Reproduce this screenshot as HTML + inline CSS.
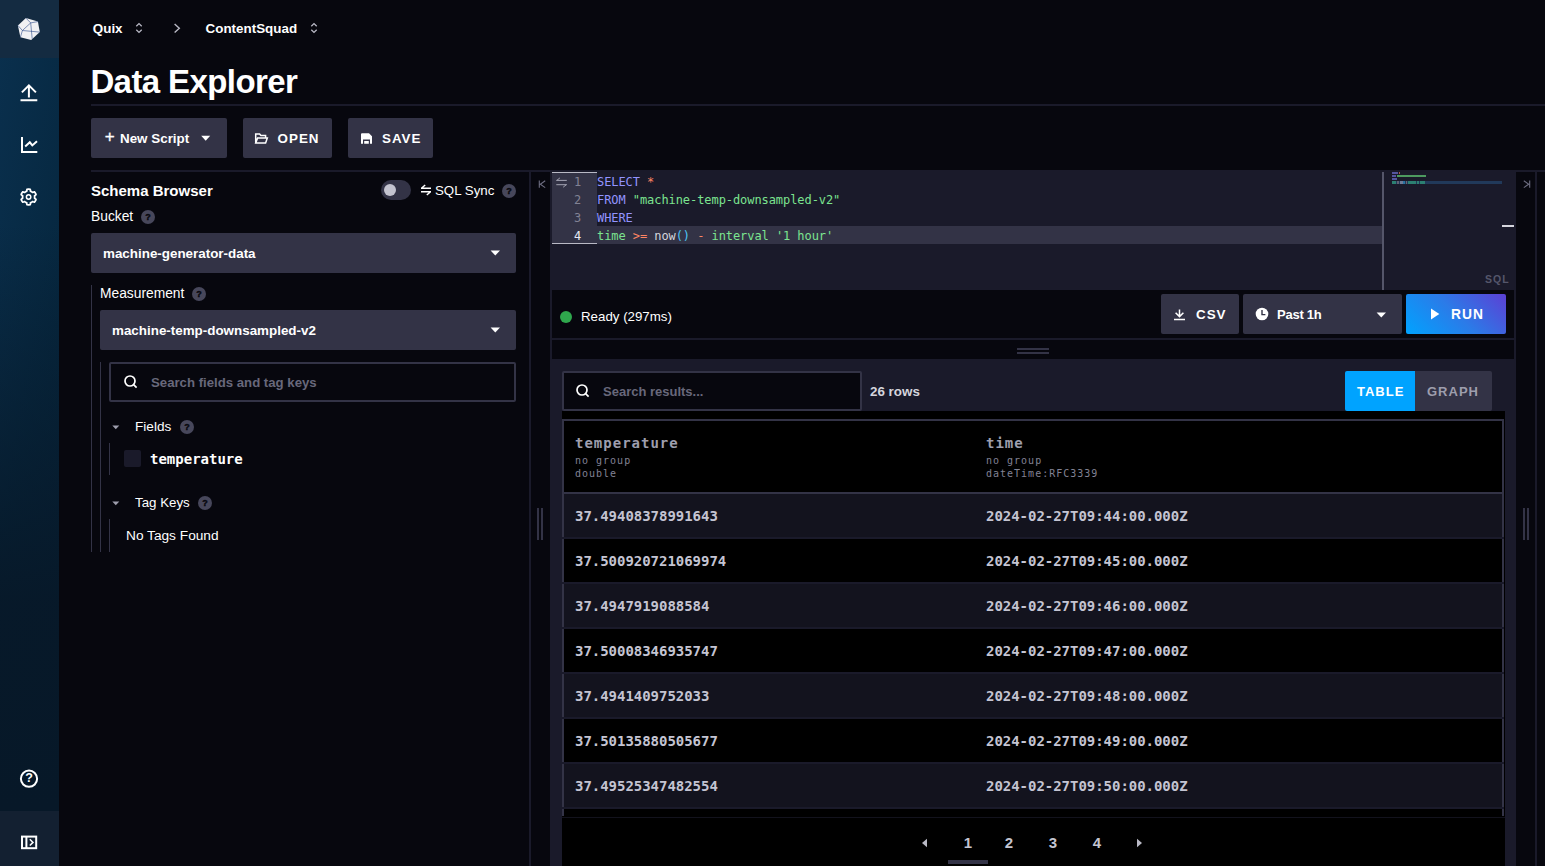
<!DOCTYPE html>
<html lang="en">
<head>
<meta charset="utf-8">
<title>Data Explorer</title>
<style>
*{box-sizing:border-box;margin:0;padding:0}
html,body{width:1545px;height:866px;overflow:hidden;background:#07070e;color:#fff;font-family:"Liberation Sans",sans-serif;}
.a{position:absolute}
.t{position:absolute;white-space:nowrap;line-height:1}
.mono{font-family:"DejaVu Sans Mono","Liberation Mono",monospace}
.b{font-weight:bold}
/* sidebar */
#nav{left:0;top:0;width:59px;height:866px;background:linear-gradient(100deg,#0a304e 0%,#06273f 55%,#052137 100%);}
#navfade{left:0;top:58px;width:59px;height:753px;background:linear-gradient(to bottom,rgba(7,24,40,0) 0%,rgba(7,24,40,0) 22%,rgba(7,24,40,.93) 72%,rgba(7,24,40,1) 100%);}
#navtop{left:0;top:0;width:59px;height:58px;background:#142b41}
#navbot{left:0;top:811px;width:59px;height:55px;background:#132031}
.btn{position:absolute;background:#333346;border-radius:2px}
.hr{position:absolute;background:#1a1a2a}
.q{position:absolute;width:14px;height:14px;border-radius:50%;background:#47475b;color:#07070e;font-size:9px;font-weight:bold;text-align:center;line-height:14px;-webkit-text-stroke:0.4px #07070e;font-family:"Liberation Sans",sans-serif}
.rv{letter-spacing:-0.03px;color:#c4c4d2 !important}
</style>
</head>
<body>
<nav aria-label="Main">
<!-- SIDEBAR -->
<div id="nav" class="a"></div>
<div id="navfade" class="a"></div>
<div id="navtop" class="a"></div>
<div id="navbot" class="a"></div>


<!-- NAV ICONS -->
<svg class="a" style="left:16px;top:16px" width="26" height="26" viewBox="16 16 26 26"><path d="M25.9 18.1 L37.9 21.6 L39.8 32.1 L31.2 40 L20.4 37.3 L17.9 25.4 Z" fill="#f1f1f3"/><path d="M25.9 18.1 L30.7 22.9 L22.4 30.5 L17.9 25.4 M30.7 22.9 L37.9 21.6 M30.7 22.9 L32.2 38.8 M22.4 30.5 L39.8 32.1 M22.4 30.5 L20.4 37.3" fill="none" stroke="#2c4a8a" stroke-width="0.6"/></svg>
<svg class="a" style="left:19px;top:82px" width="20" height="21" viewBox="19 82 20 21" fill="none" stroke="#fff" stroke-width="2"><path d="M28.9 97.6 V85.6 M21.9 92.4 L28.9 85.4 L35.9 92.4 M20.5 100.2 H37.3"/></svg>
<svg class="a" style="left:19px;top:135px" width="20" height="20" viewBox="19 135 20 20" fill="none" stroke="#fff" stroke-width="2"><path d="M22 137.1 V152.1 H37.3 M25.2 146.6 L29.8 142.3 L32.3 145.4 L37 141.2"/></svg>
<svg class="a" style="left:18px;top:186px" width="22" height="22" viewBox="-11 -11 22 22" fill="none" stroke="#fff"><path d="M6.05 0.00 L6.05 0.21 L6.04 0.42 L6.02 0.63 L5.99 0.84 L5.96 1.05 L5.98 1.27 L6.45 1.61 L6.92 1.98 L7.36 2.39 L7.33 2.67 L7.23 2.92 L7.13 3.17 L7.01 3.42 L6.89 3.66 L6.75 3.90 L6.61 4.13 L6.47 4.36 L6.31 4.58 L6.15 4.80 L5.98 5.01 L5.75 5.18 L5.18 5.00 L4.62 4.78 L4.09 4.54 L3.89 4.63 L3.72 4.77 L3.56 4.89 L3.38 5.02 L3.21 5.13 L3.03 5.24 L2.84 5.34 L2.65 5.44 L2.46 5.53 L2.27 5.61 L2.07 5.69 L1.89 5.81 L1.83 6.39 L1.74 6.99 L1.61 7.57 L1.35 7.68 L1.09 7.72 L0.82 7.76 L0.54 7.78 L0.27 7.80 L0.00 7.80 L-0.27 7.80 L-0.54 7.78 L-0.82 7.76 L-1.09 7.72 L-1.35 7.68 L-1.61 7.57 L-1.74 6.99 L-1.83 6.39 L-1.89 5.81 L-2.07 5.69 L-2.27 5.61 L-2.46 5.53 L-2.65 5.44 L-2.84 5.34 L-3.02 5.24 L-3.21 5.13 L-3.38 5.02 L-3.56 4.89 L-3.72 4.77 L-3.89 4.63 L-4.09 4.54 L-4.62 4.78 L-5.18 5.00 L-5.75 5.18 L-5.98 5.01 L-6.15 4.80 L-6.31 4.58 L-6.47 4.36 L-6.61 4.13 L-6.75 3.90 L-6.89 3.66 L-7.01 3.42 L-7.13 3.17 L-7.23 2.92 L-7.33 2.67 L-7.36 2.39 L-6.92 1.98 L-6.45 1.61 L-5.98 1.27 L-5.96 1.05 L-5.99 0.84 L-6.02 0.63 L-6.04 0.42 L-6.05 0.21 L-6.05 0.00 L-6.05 -0.21 L-6.04 -0.42 L-6.02 -0.63 L-5.99 -0.84 L-5.96 -1.05 L-5.98 -1.27 L-6.45 -1.61 L-6.92 -1.98 L-7.36 -2.39 L-7.33 -2.67 L-7.23 -2.92 L-7.13 -3.17 L-7.01 -3.42 L-6.89 -3.66 L-6.75 -3.90 L-6.61 -4.13 L-6.47 -4.36 L-6.31 -4.58 L-6.15 -4.80 L-5.98 -5.01 L-5.75 -5.18 L-5.18 -5.00 L-4.62 -4.78 L-4.09 -4.54 L-3.89 -4.63 L-3.72 -4.77 L-3.56 -4.89 L-3.38 -5.02 L-3.21 -5.13 L-3.03 -5.24 L-2.84 -5.34 L-2.65 -5.44 L-2.46 -5.53 L-2.27 -5.61 L-2.07 -5.69 L-1.89 -5.81 L-1.83 -6.39 L-1.74 -6.99 L-1.61 -7.57 L-1.35 -7.68 L-1.09 -7.72 L-0.82 -7.76 L-0.54 -7.78 L-0.27 -7.80 L-0.00 -7.80 L0.27 -7.80 L0.54 -7.78 L0.82 -7.76 L1.09 -7.72 L1.35 -7.68 L1.61 -7.57 L1.74 -6.99 L1.83 -6.39 L1.89 -5.81 L2.07 -5.69 L2.27 -5.61 L2.46 -5.53 L2.65 -5.44 L2.84 -5.34 L3.03 -5.24 L3.21 -5.13 L3.38 -5.02 L3.56 -4.89 L3.72 -4.77 L3.89 -4.63 L4.09 -4.54 L4.62 -4.78 L5.18 -5.00 L5.75 -5.18 L5.98 -5.01 L6.15 -4.80 L6.31 -4.58 L6.47 -4.36 L6.61 -4.13 L6.75 -3.90 L6.89 -3.66 L7.01 -3.42 L7.13 -3.17 L7.23 -2.92 L7.33 -2.67 L7.36 -2.39 L6.92 -1.98 L6.45 -1.61 L5.98 -1.27 L5.96 -1.05 L5.99 -0.84 L6.02 -0.63 L6.04 -0.42 L6.05 -0.21 Z" stroke-width="1.8" stroke-linejoin="round" transform="translate(-0.4,0)"/><circle cx="-0.4" cy="0" r="2.2" stroke-width="1.5"/></svg>
<svg class="a" style="left:18px;top:768px" width="22" height="22" viewBox="18 768 22 22" fill="none" stroke="#fff" stroke-width="2"><circle cx="29" cy="778.7" r="8.1"/></svg>
<div class="t b" style="left:25px;top:772px;width:8px;text-align:center;font-size:12.5px">?</div>
<svg class="a" style="left:19px;top:833px" width="20" height="18" viewBox="19 833 20 18" fill="none" stroke="#fff"><rect x="22" y="836.6" width="14.2" height="11.6" stroke-width="2"/><path d="M26.4 836 V849" stroke-width="2"/><path d="M29.8 839.3 L33 842.4 L29.8 845.5" stroke-width="1.5"/></svg>
</nav>
<header>
<!-- BREADCRUMB -->
<div id="bc1" class="t b" style="left:92.8px;top:22px;font-size:13.4px">Quix</div>
<svg class="a" style="left:134px;top:21px" width="10" height="14" viewBox="0 0 10 14" fill="none" stroke="#b9b9c5" stroke-width="1.3"><path d="M2.3 5.2 L5 2.6 L7.7 5.2 M2.3 8.8 L5 11.4 L7.7 8.8"/></svg>
<svg class="a" style="left:171px;top:21px" width="12" height="14" viewBox="0 0 12 14" fill="none" stroke="#b9b9c5" stroke-width="1.4"><path d="M3.6 3 L8.3 7.2 L3.6 11.4"/></svg>
<div id="bc2" class="t b" style="left:205.6px;top:22px;font-size:13.4px">ContentSquad</div>
<svg class="a" style="left:309px;top:21px" width="10" height="14" viewBox="0 0 10 14" fill="none" stroke="#b9b9c5" stroke-width="1.3"><path d="M2.3 5.2 L5 2.6 L7.7 5.2 M2.3 8.8 L5 11.4 L7.7 8.8"/></svg>

<!-- TITLE -->
<div id="title" class="t b" style="left:90.4px;top:65px;font-size:33px;letter-spacing:-0.6px">Data Explorer</div>
<div class="hr" style="left:91px;top:104px;width:1454px;height:2px"></div>

<!-- BUTTON ROW -->
<div class="btn" style="left:91px;top:118px;width:136px;height:40px"></div>
<div class="t" style="left:104.7px;top:128px;font-size:17px;font-weight:normal;-webkit-text-stroke:0.3px #fff">+</div>
<div id="bnew" class="t b" style="left:120px;top:132px;font-size:13.4px">New Script</div>
<svg class="a" style="left:200px;top:135px" width="12" height="7" viewBox="0 0 12 7"><path d="M1.2 0.8 L10.2 0.8 L5.7 5.8 Z" fill="#fff"/></svg>
<div class="btn" style="left:243px;top:118px;width:89px;height:40px"></div>
<svg class="a" style="left:254px;top:132px" width="15" height="13" viewBox="0 0 15 13" fill="none" stroke="#fff" stroke-width="1.5" stroke-linejoin="miter"><path d="M1.7 11 L1.7 1.9 L5.6 1.9 L6.9 3.4 L11.6 3.4 L11.6 5.6 M1.7 11 L3.6 6 L13.3 6 L11.6 11 Z"/></svg>
<div id="bopen" class="t b" style="left:277.6px;top:132px;font-size:13.4px;letter-spacing:1px">OPEN</div>
<div class="btn" style="left:348px;top:118px;width:85px;height:40px"></div>
<svg class="a" style="left:361px;top:133px" width="11" height="11" viewBox="0 0 11 11"><path d="M1 0.3 H8 L11 3.3 V10.8 H9 V6.6 H2 V10.8 H0 V1.3 Q0 0.3 1 0.3 Z M3.2 8 H7.8 V10.8 H3.2 Z" fill="#fff"/></svg>
<div id="bsave" class="t b" style="left:382px;top:132px;font-size:13.4px;letter-spacing:1px">SAVE</div>
<div class="hr" style="left:91px;top:170px;width:1454px;height:2px"></div>

</header>
<aside>
<!-- LEFT PANEL -->
<div id="sb" class="t b" style="left:91px;top:183px;font-size:15px">Schema Browser</div>
<div class="a" style="left:381px;top:180px;width:30px;height:20px;border-radius:10px;background:#333346"></div>
<div class="a" style="left:384px;top:184px;width:12px;height:12px;border-radius:50%;background:#c3c3cf"></div>
<svg class="a" style="left:420px;top:184px" width="12" height="12" viewBox="0 0 12 12" fill="none" stroke="#fff" stroke-width="1.4"><path d="M1 4.3 H11 M5.2 0.9 L1.4 4.3 M11 7.7 H1 M6.8 11.1 L10.6 7.7"/></svg>
<div id="sqlsync" class="t" style="left:435px;top:184px;font-size:13.3px">SQL Sync</div>
<div class="q" style="left:502px;top:184px">?</div>
<div id="bucket" class="t" style="left:91px;top:210px;font-size:13.8px">Bucket</div>
<div class="q" style="left:141px;top:210px">?</div>
<div class="btn" style="left:91px;top:233px;width:425px;height:40px"></div>
<div id="dd1" class="t b" style="left:103px;top:247px;font-size:13.4px">machine-generator-data</div>
<svg class="a" style="left:490px;top:250px" width="11" height="6" viewBox="0 0 11 6"><path d="M0.6 0.4 L10 0.4 L5.3 5.4 Z" fill="#fff"/></svg>
<div class="a" style="left:91px;top:285px;width:1px;height:267px;background:#333346"></div>
<div id="meas" class="t" style="left:100px;top:287px;font-size:13.8px">Measurement</div>
<div class="q" style="left:192px;top:287px">?</div>
<div class="btn" style="left:100px;top:310px;width:416px;height:40px"></div>
<div id="dd2" class="t b" style="left:112px;top:324px;font-size:13.4px">machine-temp-downsampled-v2</div>
<svg class="a" style="left:490px;top:327px" width="11" height="6" viewBox="0 0 11 6"><path d="M0.6 0.4 L10 0.4 L5.3 5.4 Z" fill="#fff"/></svg>
<div class="a" style="left:100px;top:362px;width:1px;height:190px;background:#333346"></div>
<div class="a" style="left:109px;top:362px;width:407px;height:40px;border:2px solid #333346;border-radius:2px;background:#07070e"></div>
<svg class="a" style="left:123px;top:374px" width="16" height="16" viewBox="0 0 16 16" fill="none" stroke="#fff" stroke-width="1.7"><circle cx="7" cy="7" r="5"/><path d="M10.6 10.6 L13.6 13.6"/></svg>
<div id="ph1" class="t b" style="left:151px;top:376px;font-size:13.2px;color:#68687b">Search fields and tag keys</div>
<svg class="a" style="left:112px;top:425px" width="8" height="5" viewBox="0 0 8 5"><path d="M0.3 0.5 L7.3 0.5 L3.8 4.3 Z" fill="#9e9ead"/></svg>
<div id="fields" class="t" style="left:135px;top:420px;font-size:13.6px">Fields</div>
<div class="q" style="left:180px;top:420px">?</div>
<div class="a" style="left:109px;top:443px;width:1px;height:32px;background:#333346"></div>
<div class="a" style="left:124px;top:450px;width:17px;height:17px;border-radius:2px;background:#1a1a2a"></div>
<div id="temp" class="t mono b" style="left:150px;top:452px;font-size:14px">temperature</div>
<svg class="a" style="left:112px;top:501px" width="8" height="5" viewBox="0 0 8 5"><path d="M0.3 0.5 L7.3 0.5 L3.8 4.3 Z" fill="#9e9ead"/></svg>
<div id="tagkeys" class="t" style="left:135px;top:496px;font-size:13.3px">Tag Keys</div>
<div class="q" style="left:198px;top:496px">?</div>
<div class="a" style="left:109px;top:519px;width:1px;height:33px;background:#333346"></div>
<div id="notags" class="t" style="left:126px;top:529px;font-size:13.7px">No Tags Found</div>
</aside>
<main>
<!-- DIVIDERS -->
<div class="hr" style="left:529px;top:172px;width:2px;height:694px"></div>
<div class="a" style="left:537px;top:508px;width:2px;height:32px;background:#333346"></div>
<div class="a" style="left:541px;top:508px;width:2px;height:32px;background:#333346"></div>
<svg class="a" style="left:537px;top:179px" width="10" height="10" viewBox="0 0 10 10" fill="none" stroke="#6e6e82" stroke-width="1.1"><path d="M2.3 1.6 V8.8 M8.2 1.8 L3.3 5.2 L8.2 8.6"/></svg>

<!-- EDITOR -->
<div class="a" style="left:550px;top:172px;width:966px;height:694px;background:#1a1a2a"></div>
<div class="a" style="left:552px;top:290px;width:962px;height:48px;background:#07070e"></div>
<div class="a" style="left:552px;top:340px;width:962px;height:19px;background:#07070e"></div>
<div class="a" style="left:597px;top:226px;width:785px;height:18px;background:#333346"></div>
<div class="a" style="left:552px;top:172px;width:45px;height:72px;background:#333346;border-top:1px solid #b9b9c5;border-bottom:1px solid #b9b9c5"></div>
<svg class="a" style="left:556px;top:176px" width="12" height="12" viewBox="0 0 12 12" fill="none" stroke="#a5a5b4" stroke-width="1"><path d="M0.3 4.4 H10.8 M0.8 4.4 L3.9 1.9 M10.8 8.7 H0.3 M10.3 8.7 L7.2 11.2"/></svg>
<div class="t mono" style="left:553px;top:173px;width:45px;font-size:12px;line-height:18px;color:#828294"><div style="padding-left:21px">1</div><div style="padding-left:21px">2</div><div style="padding-left:21px">3</div><div style="padding-left:21px;color:#e7e8f3">4</div></div>
<div id="code" class="t mono" style="left:597px;top:173px;font-size:12px;line-height:18px;color:#d5d5dd;letter-spacing:-0.07px"><div><span style="color:#9394ff">SELECT</span> <span style="color:#ff8564">*</span></div><div><span style="color:#9394ff">FROM</span> <span style="color:#7ce490">"machine-temp-downsampled-v2"</span></div><div><span style="color:#9394ff">WHERE</span></div><div><span style="color:#7ce490">time</span> <span style="color:#ff8564">&gt;=</span> <span style="color:#d5d5dd">now</span><span style="color:#4ec5f5">()</span> <span style="color:#ff8564">-</span> <span style="color:#7ce490">interval</span> <span style="color:#7ce490">'1 hour'</span></div></div>
<!-- minimap -->
<div class="a" style="left:1382px;top:172px;width:2px;height:118px;background:#55566a"></div>
<div class="a" style="left:1392px;top:181px;width:110px;height:3px;background:#21395a"></div>
<div class="a" style="left:1392px;top:181px;width:4px;height:3px;background:#2c8072"></div>
<div class="a" style="left:1397px;top:181px;width:2px;height:3px;background:#5f6174"></div>
<div class="a" style="left:1400px;top:181px;width:3px;height:3px;background:#6f7b97"></div>
<div class="a" style="left:1403px;top:181px;width:2px;height:3px;background:#2a72a0"></div>
<div class="a" style="left:1406px;top:181px;width:1px;height:3px;background:#6a6474"></div>
<div class="a" style="left:1408px;top:181px;width:8px;height:3px;background:#2c8072"></div>
<div class="a" style="left:1417px;top:181px;width:2px;height:3px;background:#2c8072"></div>
<div class="a" style="left:1420px;top:181px;width:5px;height:3px;background:#2c8072"></div>
<div class="a" style="left:1392px;top:172px;width:6px;height:2px;background:#5556a0"></div>
<div class="a" style="left:1399px;top:172px;width:1px;height:2px;background:#a85a4a"></div>
<div class="a" style="left:1392px;top:175px;width:4px;height:2px;background:#5556a0"></div>
<div class="a" style="left:1397px;top:175px;width:29px;height:2px;background:#4d9a60"></div>
<div class="a" style="left:1392px;top:178px;width:5px;height:2px;background:#5556a0"></div>
<div class="a" style="left:1502px;top:225px;width:12px;height:2px;background:#d5d5dd"></div>
<div id="sql" class="t b" style="left:1485px;top:274px;font-size:10.5px;letter-spacing:1px;color:#55566a">SQL</div>
<!-- right strip -->
<div class="hr" style="left:1535px;top:171px;width:2px;height:695px"></div>
<svg class="a" style="left:1522px;top:179px" width="10" height="10" viewBox="0 0 10 10" fill="none" stroke="#6e6e82" stroke-width="1.1"><path d="M7.7 1.6 V8.8 M1.8 1.8 L6.7 5.2 L1.8 8.6"/></svg>
<div class="a" style="left:1523px;top:508px;width:2px;height:32px;background:#333346"></div>
<div class="a" style="left:1527px;top:508px;width:2px;height:32px;background:#333346"></div>

<!-- STATUS ROW -->
<div class="a" style="left:560px;top:311px;width:12px;height:12px;border-radius:50%;background:#2fa74d"></div>
<div id="ready" class="t" style="left:581px;top:310px;font-size:13.3px">Ready (297ms)</div>
<div class="btn" style="left:1161px;top:294px;width:78px;height:40px"></div>
<svg class="a" style="left:1173px;top:307px" width="13" height="14" viewBox="0 0 13 14" fill="none" stroke="#fff" stroke-width="1.5"><path d="M6.5 2.4 V9.4 M2.6 5.8 L6.5 9.6 L10.4 5.8 M1 12.4 H12"/></svg>
<div id="csv" class="t b" style="left:1196px;top:308px;font-size:13.4px;letter-spacing:1px">CSV</div>
<div class="btn" style="left:1243px;top:294px;width:159px;height:40px"></div>
<svg class="a" style="left:1255px;top:307px" width="14" height="14" viewBox="0 0 14 14"><circle cx="7" cy="7" r="6.3" fill="#fff"/><path d="M7 3 V7.6 H10.4" fill="none" stroke="#333346" stroke-width="1.4"/></svg>
<div id="past" class="t b" style="left:1277px;top:308px;letter-spacing:-0.25px;font-size:13px">Past 1h</div>
<svg class="a" style="left:1376px;top:312px" width="11" height="6" viewBox="0 0 11 6"><path d="M0.6 0.4 L10 0.4 L5.3 5.4 Z" fill="#fff"/></svg>
<div class="a" style="left:1406px;top:294px;width:100px;height:40px;border-radius:2px;background:linear-gradient(45deg,#00a3ff 0%,#2b7be8 50%,#5c40d4 100%)"></div>
<svg class="a" style="left:1430px;top:308px" width="10" height="12" viewBox="0 0 10 12"><path d="M1 0.5 L9.3 6 L1 11.5 Z" fill="#fff"/></svg>
<div id="run" class="t b" style="left:1451px;top:308px;font-size:13.8px;letter-spacing:1px">RUN</div>
<div class="a" style="left:1017px;top:348px;width:32px;height:2px;background:#333346"></div>
<div class="a" style="left:1017px;top:352px;width:32px;height:2px;background:#333346"></div>

<!-- RESULTS -->
<div class="a" style="left:562px;top:371px;width:300px;height:40px;border:2px solid #333346;border-radius:2px;background:#07070e"></div>
<svg class="a" style="left:575px;top:383px" width="16" height="16" viewBox="0 0 16 16" fill="none" stroke="#fff" stroke-width="1.7"><circle cx="7" cy="7" r="5"/><path d="M10.6 10.6 L13.6 13.6"/></svg>
<div id="ph2" class="t b" style="left:603px;top:385px;font-size:13px;color:#68687b">Search results...</div>
<div id="rows" class="t b" style="left:870px;top:385px;font-size:13.4px;color:#d5d5dd">26 rows</div>
<div class="a" style="left:1345px;top:371px;width:70px;height:40px;background:#00a3ff;border-radius:2px 0 0 2px"></div>
<div id="ttable" class="t b" style="left:1357px;top:385px;font-size:13px;letter-spacing:1px">TABLE</div>
<div class="a" style="left:1415px;top:371px;width:77px;height:40px;background:#333346;border-radius:0 2px 2px 0"></div>
<div id="tgraph" class="t b" style="left:1427px;top:385px;font-size:13px;letter-spacing:1px;color:#9e9ead">GRAPH</div>
<div class="a" style="left:562px;top:411px;width:943px;height:455px;background:#000"></div>
<div id="tbl" class="a" style="left:562px;top:419px;width:942px;height:397px;border-left:2px solid #333346;border-right:2px solid #333346;border-top:2px solid #333346"></div>
<div class="a" style="left:562px;top:492px;width:942px;height:2px;background:#333346"></div>
<div id="h1" class="t mono b" style="left:575px;top:436px;font-size:14px;letter-spacing:1px;color:#9e9ead">temperature</div>
<div class="t mono" style="left:575px;top:456px;font-size:10px;letter-spacing:1px;color:#828294">no group</div>
<div class="t mono" style="left:575px;top:469px;font-size:10px;letter-spacing:1px;color:#828294">double</div>
<div id="h2" class="t mono b" style="left:986px;top:436px;font-size:14px;letter-spacing:1px;color:#9e9ead">time</div>
<div class="t mono" style="left:986px;top:456px;font-size:10px;letter-spacing:1px;color:#828294">no group</div>
<div class="t mono" style="left:986px;top:469px;font-size:10px;letter-spacing:1px;color:#828294">dateTime:RFC3339</div>
<div class="a" style="left:564px;top:494px;width:938px;height:43px;background:#13131e"></div>
<div class="a" style="left:562px;top:537px;width:942px;height:2px;background:#1a1a2a"></div>
<div class="t mono b rv" style="left:575px;top:509px;font-size:14px;color:#d5d5dd">37.49408378991643</div>
<div class="t mono b rv" style="left:986px;top:509px;font-size:14px;color:#d5d5dd">2024-02-27T09:44:00.000Z</div>
<div class="a" style="left:564px;top:539px;width:938px;height:43px;background:#000"></div>
<div class="a" style="left:562px;top:582px;width:942px;height:2px;background:#1a1a2a"></div>
<div class="t mono b rv" style="left:575px;top:554px;font-size:14px;color:#d5d5dd">37.500920721069974</div>
<div class="t mono b rv" style="left:986px;top:554px;font-size:14px;color:#d5d5dd">2024-02-27T09:45:00.000Z</div>
<div class="a" style="left:564px;top:584px;width:938px;height:43px;background:#13131e"></div>
<div class="a" style="left:562px;top:627px;width:942px;height:2px;background:#1a1a2a"></div>
<div class="t mono b rv" style="left:575px;top:599px;font-size:14px;color:#d5d5dd">37.4947919088584</div>
<div class="t mono b rv" style="left:986px;top:599px;font-size:14px;color:#d5d5dd">2024-02-27T09:46:00.000Z</div>
<div class="a" style="left:564px;top:629px;width:938px;height:43px;background:#000"></div>
<div class="a" style="left:562px;top:672px;width:942px;height:2px;background:#1a1a2a"></div>
<div class="t mono b rv" style="left:575px;top:644px;font-size:14px;color:#d5d5dd">37.50008346935747</div>
<div class="t mono b rv" style="left:986px;top:644px;font-size:14px;color:#d5d5dd">2024-02-27T09:47:00.000Z</div>
<div class="a" style="left:564px;top:674px;width:938px;height:43px;background:#13131e"></div>
<div class="a" style="left:562px;top:717px;width:942px;height:2px;background:#1a1a2a"></div>
<div class="t mono b rv" style="left:575px;top:689px;font-size:14px;color:#d5d5dd">37.4941409752033</div>
<div class="t mono b rv" style="left:986px;top:689px;font-size:14px;color:#d5d5dd">2024-02-27T09:48:00.000Z</div>
<div class="a" style="left:564px;top:719px;width:938px;height:43px;background:#000"></div>
<div class="a" style="left:562px;top:762px;width:942px;height:2px;background:#1a1a2a"></div>
<div class="t mono b rv" style="left:575px;top:734px;font-size:14px;color:#d5d5dd">37.50135880505677</div>
<div class="t mono b rv" style="left:986px;top:734px;font-size:14px;color:#d5d5dd">2024-02-27T09:49:00.000Z</div>
<div class="a" style="left:564px;top:764px;width:938px;height:43px;background:#13131e"></div>
<div class="a" style="left:562px;top:807px;width:942px;height:2px;background:#1a1a2a"></div>
<div class="t mono b rv" style="left:575px;top:779px;font-size:14px;color:#d5d5dd">37.49525347482554</div>
<div class="t mono b rv" style="left:986px;top:779px;font-size:14px;color:#d5d5dd">2024-02-27T09:50:00.000Z</div>

<!-- PAGINATION -->
<div class="a" style="left:562px;top:816px;width:943px;height:50px;background:#000"></div>
<svg class="a" style="left:921px;top:838px" width="7" height="10" viewBox="0 0 7 10"><path d="M6 0.8 L6 9.2 L1 5 Z" fill="#b9b9c5"/></svg>
<div class="t pg b" style="left:948px;top:835px;width:40px;text-align:center;font-size:15px;color:#c4c4d0">1</div>
<div class="t pg b" style="left:989px;top:835px;width:40px;text-align:center;font-size:15px;color:#c4c4d0">2</div>
<div class="t pg b" style="left:1033px;top:835px;width:40px;text-align:center;font-size:15px;color:#c4c4d0">3</div>
<div class="t pg b" style="left:1077px;top:835px;width:40px;text-align:center;font-size:15px;color:#c4c4d0">4</div>
<svg class="a" style="left:1136px;top:838px" width="7" height="10" viewBox="0 0 7 10"><path d="M1 0.8 L1 9.2 L6 5 Z" fill="#b9b9c5"/></svg>
<div class="a" style="left:948px;top:860px;width:40px;height:4px;background:#333346"></div>
<div class="a" style="left:562px;top:817px;width:943px;height:1px;background:#12121c"></div>
</main>
</body>
</html>
